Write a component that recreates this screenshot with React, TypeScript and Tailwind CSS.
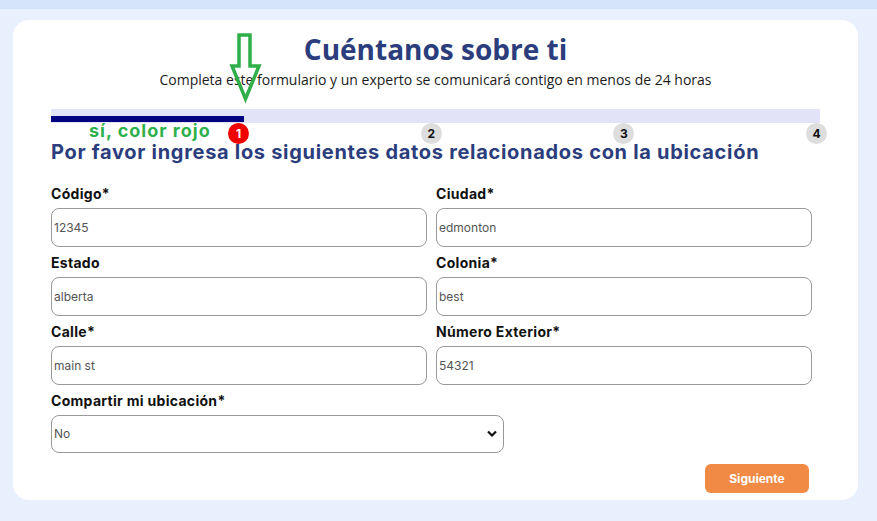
import { useState } from "react";

const fields = [
  { label: "Código*", value: "12345" },
  { label: "Ciudad*", value: "edmonton" },
  { label: "Estado", value: "alberta" },
  { label: "Colonia*", value: "best" },
  { label: "Calle*", value: "main st" },
  { label: "Número Exterior*", value: "54321" },
];

const steps = ["1", "2", "3", "4"];

export default function App() {
  const [share, setShare] = useState("No");

  return (
    <div className="min-h-screen bg-[#e8f0fe] font-['Inter',sans-serif]">
      {/* top strip */}
      <div className="h-[9px] bg-[#d6e4fb]" />

      <div className="px-[13px] pt-[11px] pb-[20px]">
        <div className="relative w-[845px] h-[480px] bg-white rounded-[16px] pt-[11px] pl-[38px] pr-[38px]">
          {/* Heading */}
          <div className="text-center">
            <h1 className="text-[28px] leading-[36px] font-bold text-[#2b3d7c] font-['Open_Sans',sans-serif]">
              Cuéntanos sobre ti
            </h1>
            <p className="mt-[4px] text-[14px] leading-[18px] text-[#1c1c1c] font-['Open_Sans',sans-serif]">
              Completa este formulario y un experto se comunicará contigo en menos de 24 horas
            </p>
          </div>

          {/* Progress */}
          <div className="mt-[20px] relative">
            <div className="h-[14px] bg-[#e3e3f8] relative">
              <div className="absolute left-0 bottom-[1px] h-[6px] w-[193px] bg-[#000080]" />
            </div>
            <div className="flex justify-between pl-[177px] -mr-[7px] h-[21px]">
              {steps.map((s) => (
                <div
                  key={s}
                  className={
                    s === "1"
                      ? "w-[21px] h-[21px] rounded-full bg-[#f00000] text-white text-[12px] font-bold flex items-center justify-center"
                      : "w-[21px] h-[21px] rounded-full bg-[#dddddd] text-[#111] text-[12px] font-bold flex items-center justify-center"
                  }
                >
                  {s}
                </div>
              ))}
            </div>
          </div>

          <h2 className="-mt-[5px] text-[20px] leading-[26px] font-bold text-[#2b3d7c] tracking-[0.7px]">
            Por favor ingresa los siguientes datos relacionados con la ubicación
          </h2>

          {/* Form */}
          <div className="mt-[16px] w-[761px] grid grid-cols-2 gap-x-[9px]">
            {fields.map((f) => (
              <div key={f.label} className="flex flex-col">
                <label className="h-[27px] pt-[4px] text-[14px] leading-[18px] font-bold text-[#111] tracking-[0.3px]">
                  {f.label}
                </label>
                <input
                  defaultValue={f.value}
                  className="h-[39px] mb-[3px] rounded-[8px] border border-[#999] px-[2px] text-[12px] text-[#555] outline-none"
                />
              </div>
            ))}
          </div>

          <div className="flex flex-col w-[453px]">
            <label className="h-[27px] pt-[4px] text-[14px] leading-[18px] font-bold text-[#111] tracking-[0.3px]">
              Compartir mi ubicación*
            </label>
            <div className="relative">
              <select
                value={share}
                onChange={(e) => setShare(e.target.value)}
                className="w-full h-[38px] appearance-none rounded-[8px] border border-[#999] px-[2px] text-[12px] text-[#555] bg-white outline-none"
              >
                <option>No</option>
                <option>Sí</option>
              </select>
              <svg
                className="absolute right-[7px] top-[15px] w-[10px] h-[8px]"
                viewBox="0 0 10 8"
              >
                <path d="M1 1.5 L5 5.5 L9 1.5" stroke="#111" strokeWidth="2.2" fill="none" />
              </svg>
            </div>
          </div>

          <div className="flex justify-end mt-[11px] pr-[11px]">
            <button className="w-[104px] h-[29px] rounded-[6px] bg-[#f08a44] text-white text-[12px] font-bold">
              Siguiente
            </button>
          </div>

          {/* annotation */}
          <div className="absolute left-[76px] top-[100px] text-[18px] leading-[22px] font-bold text-[#2eb14c] tracking-[1px]">
            sí, color rojo
          </div>
          <svg
            className="absolute left-[215px] top-[12px] w-[36px] h-[75px]"
            viewBox="0 0 36 75"
          >
            <path
              d="M11 3 L22 3 L22 34 L31 34 L17.5 67 L4 34 L11 34 Z"
              fill="none"
              stroke="#2fae4a"
              strokeWidth="3.5"
              strokeLinejoin="miter"
            />
          </svg>
        </div>
      </div>
    </div>
  );
}
